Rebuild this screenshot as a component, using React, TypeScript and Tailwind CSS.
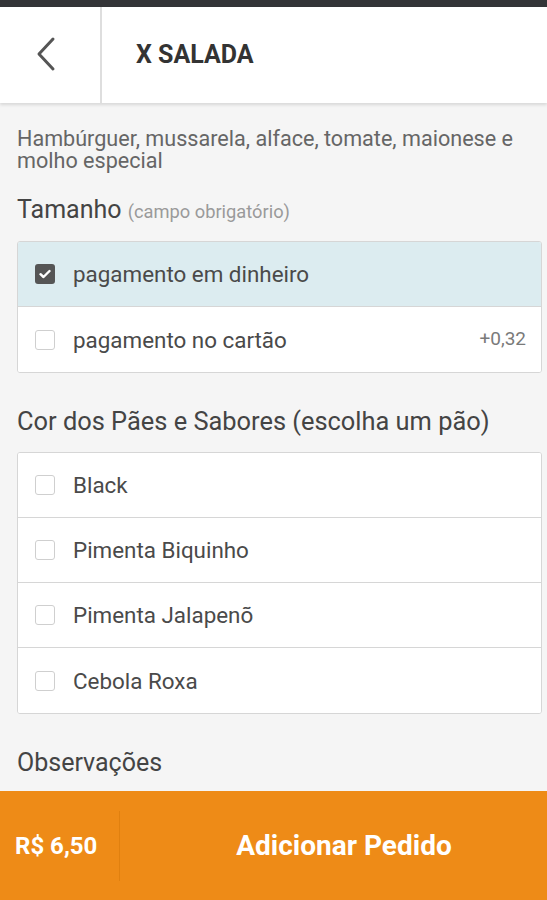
import React from "react";

const Check = ({ checked }: { checked?: boolean }) =>
  checked ? (
    <div className="w-[20px] h-[20px] rounded-[3px] bg-[#555555] flex items-center justify-center shrink-0">
      <svg width="12" height="10" viewBox="0 0 12 10">
        <path d="M1.5 5.2 L4.5 8 L10.5 2" fill="none" stroke="#fff" strokeWidth="2.4" strokeLinecap="round" strokeLinejoin="round" />
      </svg>
    </div>
  ) : (
    <div className="w-[20px] h-[20px] rounded-[3px] border border-[#cfcfcf] bg-white shrink-0" />
  );

const Row = ({ label, checked, price, last }: { label: string; checked?: boolean; price?: string; last?: boolean }) => (
  <div
    className={`h-[65px] flex items-center pl-[17px] pr-[15px] ${checked ? "bg-[#dcecf0]" : "bg-white"} ${last ? "" : "border-b border-[#d6d6d6]"}`}
  >
    <Check checked={checked} />
    <span className="ml-[18px] text-[22.4px] text-[#4a4a4a] flex-1 leading-[28px]">{label}</span>
    {price && <span className="text-[19px] text-[#7a7a7a]">{price}</span>}
  </div>
);

export default function App() {
  return (
    <div className="w-[547px] h-[900px] bg-[#f5f5f5] flex flex-col overflow-hidden" style={{ fontFamily: "Roboto, 'Noto Sans', sans-serif" }}>
      <div className="h-[7px] bg-[#333437] shrink-0" />
      <div className="h-[96px] bg-white flex shrink-0 shadow-[0_2px_3px_rgba(0,0,0,0.12)] relative z-10">
        <div className="w-[102px] flex items-center justify-center border-r-2 border-[#dedede]">
          <svg width="24" height="36" viewBox="0 0 24 36" className="mr-[8px] mt-[-2px]">
            <path d="M19 3 L5 18 L19 33" fill="none" stroke="#555" strokeWidth="3" strokeLinecap="round" strokeLinejoin="round" />
          </svg>
        </div>
        <div className="flex items-center pl-[34px] text-[25px] font-bold text-[#333]">X SALADA</div>
      </div>
      <div className="flex-1 px-[17px] pt-[25px]">
        <p className="text-[21.6px] leading-[22px] text-[#666]">
          Hambúrguer, mussarela, alface, tomate, maionese e molho especial
        </p>
        <div className="mt-[24px] text-[25px] text-[#444] leading-[28px] whitespace-nowrap">
          Tamanho <span className="text-[18.3px] text-[#9a9a9a]">(campo obrigatório)</span>
        </div>
        <div className="mt-[15px] mr-[-12px] bg-white border border-[#d6d6d6] rounded-[3px] overflow-hidden">
          <Row label="pagamento em dinheiro" checked />
          <Row label="pagamento no cartão" price="+0,32" last />
        </div>
        <div className="mt-[34px] text-[25.4px] text-[#444] leading-[28px] whitespace-nowrap">Cor dos Pães e Sabores (escolha um pão)</div>
        <div className="mt-[17px] mr-[-12px] bg-white border border-[#d6d6d6] rounded-[3px] overflow-hidden">
          <Row label="Black" />
          <Row label="Pimenta Biquinho" />
          <Row label="Pimenta Jalapenõ" />
          <Row label="Cebola Roxa" last />
        </div>
        <div className="mt-[35px] text-[25px] text-[#444] leading-[28px]">Observações</div>
      </div>
      <div className="h-[109px] bg-[#ee8b17] flex items-center shrink-0">
        <div className="w-[120px] h-[70px] flex items-center pl-[15px] border-r border-[#e0800f] text-white font-bold text-[24px]">R$ 6,50</div>
        <div className="flex-1 text-center text-white font-bold text-[28px] pl-[21px]">Adicionar Pedido</div>
      </div>
    </div>
  );
}
